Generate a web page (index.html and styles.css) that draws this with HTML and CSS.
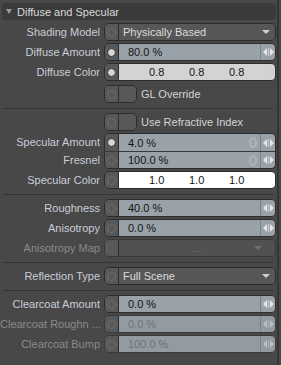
FILE: index.html
```html
<!DOCTYPE html>
<html lang="en">
<head>
  <meta charset="UTF-8" />
  <title>Diffuse and Specular</title>
  <link rel="stylesheet" href="styles.css">
</head>
<body>
  <div class="panel">
    <div class="group-head"><span class="twist"></span>Diffuse and Specular</div>

    <div class="row first">
      <label>Shading Model</label>
      <div class="ctl"><span class="key"></span><div class="drop">Physically Based<span class="caret"></span></div></div>
    </div>
    <div class="row">
      <label>Diffuse Amount</label>
      <div class="ctl"><span class="key on"></span><div class="num">80.0 %</div><span class="spin"><svg width="11" height="8" viewBox="0 0 11 8"><path d="M0 4L4 0V8Z M7 0L11 4L7 8Z" fill="#e6e6e6"/><rect x="5" y="0" width="1" height="8" fill="#c9ced2"/></svg></span></div>
    </div>
    <div class="row">
      <label>Diffuse Color</label>
      <div class="ctl"><span class="key on"></span><div class="rgb grey"><span>0.8</span><span>0.8</span><span>0.8</span></div></div>
    </div>
    <div class="row gap">
      <label></label>
      <div class="check-line"><div class="ctl check"><span class="key"></span><span class="box"></span></div><span class="check-text">GL Override</span></div>
    </div>

    <div class="sep"></div>

    <div class="row">
      <label></label>
      <div class="check-line"><div class="ctl check"><span class="key"></span><span class="box"></span></div><span class="check-text">Use Refractive Index</span></div>
    </div>
    <div class="row">
      <label>Specular Amount</label>
      <div class="ctl top"><span class="key on"></span><div class="num">4.0 %<span class="link"><svg width="8" height="11" viewBox="0 0 8 11"><ellipse cx="4" cy="5.5" rx="3" ry="4.5" fill="none" stroke="#adb4ba" stroke-width="2"/></svg></span></div><span class="spin"><svg width="11" height="8" viewBox="0 0 11 8"><path d="M0 4L4 0V8Z M7 0L11 4L7 8Z" fill="#e6e6e6"/><rect x="5" y="0" width="1" height="8" fill="#c9ced2"/></svg></span></div>
    </div>
    <div class="row joined">
      <label>Fresnel</label>
      <div class="ctl bottom"><span class="key"></span><div class="num">100.0 %<span class="link"><svg width="8" height="11" viewBox="0 0 8 11"><ellipse cx="4" cy="5.5" rx="3" ry="4.5" fill="none" stroke="#adb4ba" stroke-width="2"/></svg></span></div><span class="spin"><svg width="11" height="8" viewBox="0 0 11 8"><path d="M0 4L4 0V8Z M7 0L11 4L7 8Z" fill="#e6e6e6"/><rect x="5" y="0" width="1" height="8" fill="#c9ced2"/></svg></span></div>
    </div>
    <div class="row">
      <label>Specular Color</label>
      <div class="ctl"><span class="key"></span><div class="rgb white"><span>1.0</span><span>1.0</span><span>1.0</span></div></div>
    </div>

    <div class="sep"></div>

    <div class="row">
      <label>Roughness</label>
      <div class="ctl"><span class="key"></span><div class="num">40.0 %</div><span class="spin"><svg width="11" height="8" viewBox="0 0 11 8"><path d="M0 4L4 0V8Z M7 0L11 4L7 8Z" fill="#e6e6e6"/><rect x="5" y="0" width="1" height="8" fill="#c9ced2"/></svg></span></div>
    </div>
    <div class="row">
      <label>Anisotropy</label>
      <div class="ctl"><span class="key"></span><div class="num">0.0 %</div><span class="spin"><svg width="11" height="8" viewBox="0 0 11 8"><path d="M0 4L4 0V8Z M7 0L11 4L7 8Z" fill="#e6e6e6"/><rect x="5" y="0" width="1" height="8" fill="#c9ced2"/></svg></span></div>
    </div>
    <div class="row off">
      <label>Anisotropy Map</label>
      <div class="ctl"><span class="key blank"></span><div class="drop center">...<span class="caret"></span></div></div>
    </div>

    <div class="sep"></div>

    <div class="row">
      <label>Reflection Type</label>
      <div class="ctl"><span class="key"></span><div class="drop">Full Scene<span class="caret"></span></div></div>
    </div>

    <div class="sep"></div>

    <div class="row">
      <label>Clearcoat Amount</label>
      <div class="ctl"><span class="key"></span><div class="num">0.0 %</div><span class="spin"><svg width="11" height="8" viewBox="0 0 11 8"><path d="M0 4L4 0V8Z M7 0L11 4L7 8Z" fill="#e6e6e6"/><rect x="5" y="0" width="1" height="8" fill="#c9ced2"/></svg></span></div>
    </div>
    <div class="row off">
      <label>Clearcoat Roughn ...</label>
      <div class="ctl"><span class="key"></span><div class="num">0.0 %</div><span class="spin"><svg width="11" height="8" viewBox="0 0 11 8"><path d="M0 4L4 0V8Z M7 0L11 4L7 8Z" fill="#b9c0c5"/><rect x="5" y="0" width="1" height="8" fill="#a9b0b5"/></svg></span></div>
    </div>
    <div class="row off">
      <label>Clearcoat Bump</label>
      <div class="ctl"><span class="key"></span><div class="num">100.0 %</div><span class="spin"><svg width="11" height="8" viewBox="0 0 11 8"><path d="M0 4L4 0V8Z M7 0L11 4L7 8Z" fill="#b9c0c5"/><rect x="5" y="0" width="1" height="8" fill="#a9b0b5"/></svg></span></div>
    </div>
  </div>
</body>
</html>
```

FILE: styles.css
```css
body {
  margin: 0;
  background-color: #484848;
  font-family: "Liberation Sans", Arial, sans-serif;
  font-size: 11px;
  color: #c8ced8;
}
.panel {
  width: 279px;
  height: 365px;
  padding-top: 3px;
  box-sizing: border-box;
  border-right: 2px solid #353535;
  overflow: hidden;
}
.group-head {
  display: flex;
  align-items: center;
  height: 17px;
  margin: 0 1px 0 2px;
  background-color: #3b3b3b;
  border-radius: 4px;
  color: #d8d8d8;
  font-size: 11px;
}
.twist {
  width: 0;
  height: 0;
  margin: 0 5px 0 4px;
  border-left: 3px solid transparent;
  border-right: 3px solid transparent;
  border-top: 5px solid #9a9a9a;
}
.row {
  display: grid;
  grid-template-columns: 100px 172px;
  column-gap: 4px;
  height: 18px;
  margin-top: 2px;
}
.row.first {
  margin-top: 3px;
}
.row.gap {
  margin-top: 4px;
}
.row.joined {
  margin-top: 0;
}
.row label {
  line-height: 18px;
  text-align: right;
  white-space: nowrap;
  overflow: hidden;
}
.row.off label {
  color: #8a8a8a;
}
.ctl {
  display: flex;
  height: 18px;
  box-sizing: border-box;
  border: 1px solid #2c2c2c;
  border-radius: 5px;
  overflow: hidden;
}
.ctl.top {
  border-bottom-width: 0;
  border-bottom-left-radius: 0;
  border-bottom-right-radius: 0;
}
.ctl.bottom {
  border-top: 1px solid #3a3a3a;
  border-top-left-radius: 0;
  border-top-right-radius: 0;
}
.key {
  flex: none;
  width: 13px;
  display: flex;
  align-items: center;
  justify-content: center;
  background-color: #585858;
  border-right: 1px solid #2c2c2c;
}
.key::after {
  content: "";
  width: 7px;
  height: 7px;
  border: 1px solid #6c6c6c;
  border-radius: 50%;
}
.key.on::after {
  background-color: #d6d6d6;
  border-color: #303030;
}
.key.blank::after {
  border-color: #5e5e5e;
}
.num {
  flex: 1;
  display: flex;
  align-items: center;
  padding-left: 9px;
  background-color: #99a1a9;
  color: #141414;
}
.row.off .num {
  background-color: #939ba2;
  color: #6d7378;
}
.link {
  display: flex;
  margin-left: auto;
  margin-right: 3px;
}
.spin {
  flex: none;
  width: 14px;
  display: flex;
  align-items: center;
  justify-content: center;
  background-color: #99a1a9;
  border-left: 1px solid #7c848b;
}
.row.off .spin {
  background-color: #939ba2;
}
.drop {
  flex: 1;
  display: flex;
  align-items: center;
  padding-left: 4px;
  background-color: #575757;
  color: #dcdcdc;
}
.drop.center {
  justify-content: center;
  padding-left: 0;
  color: #767676;
  background-color: #515151;
}
.caret {
  width: 0;
  height: 0;
  margin-left: auto;
  margin-right: 5px;
  border-left: 4px solid transparent;
  border-right: 4px solid transparent;
  border-top: 4px solid #d0d0d0;
}
.drop.center .caret {
  position: absolute;
  right: 8px;
  border-top-color: #6e6e6e;
}
.row.off .ctl {
  position: relative;
  border-color: #3a3a3a;
}
.rgb {
  flex: 1;
  display: flex;
  align-items: center;
  padding-left: 30px;
  color: #141414;
}
.rgb span {
  width: 40px;
}
.rgb.grey {
  background-color: #d3d3d3;
}
.rgb.white {
  background-color: #ffffff;
}
.check-line {
  display: flex;
  align-items: center;
}
.ctl.check {
  width: 33px;
}
.box {
  flex: 1;
  background-color: #585858;
}
.check-text {
  margin-left: 4px;
  color: #d4d4d4;
}
.sep {
  height: 1px;
  margin: 5px 4px 4px 3px;
  background-color: #333333;
}
```
